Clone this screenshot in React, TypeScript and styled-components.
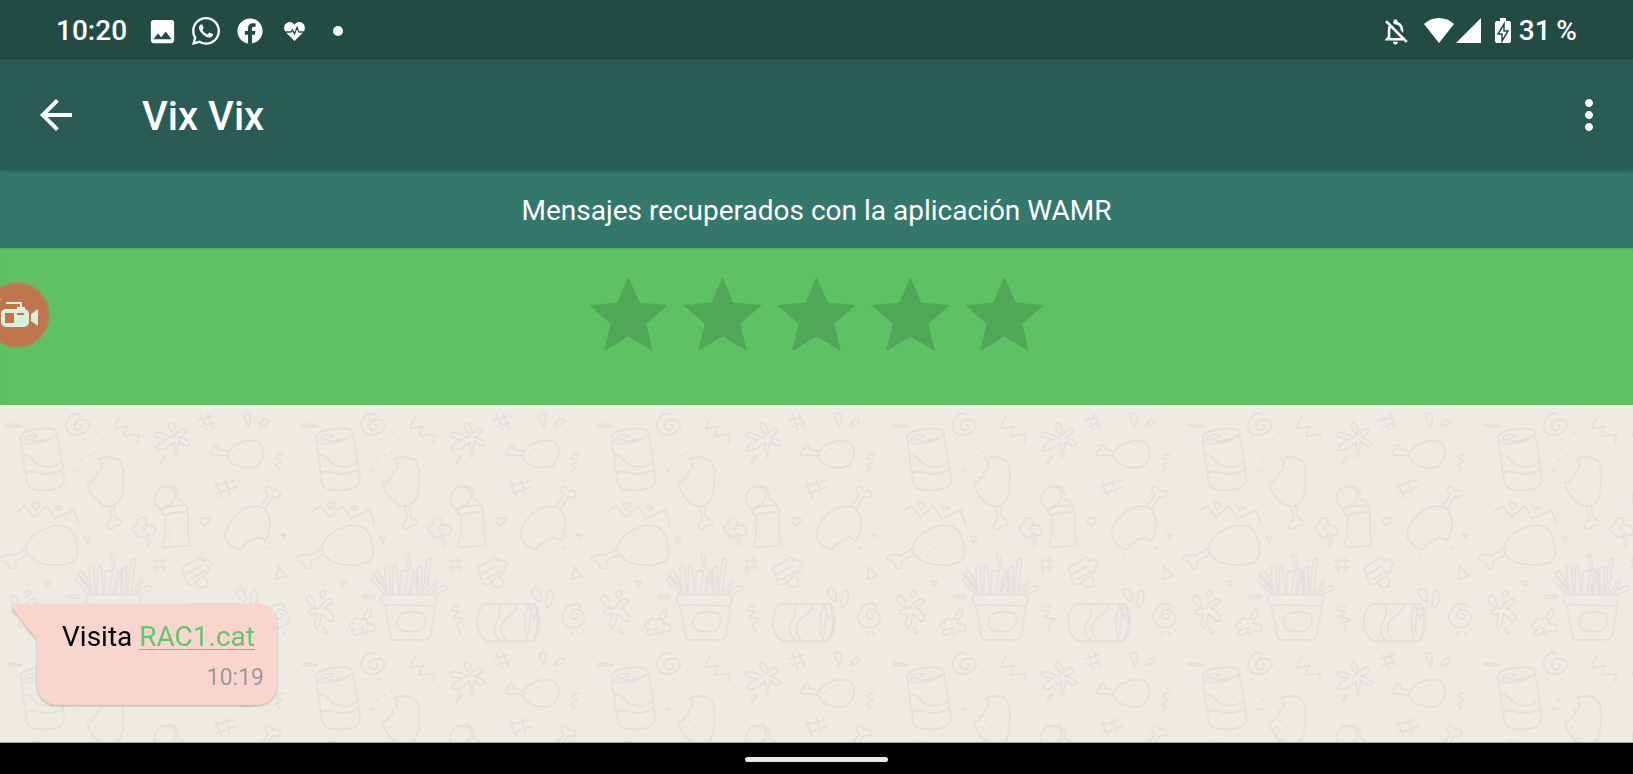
import React from 'react';
import styled, { createGlobalStyle } from 'styled-components';
import { MdImage, MdArrowBack, MdMoreVert, MdOutlineNotificationsOff } from 'react-icons/md';
import { FaWhatsapp, FaFacebook } from 'react-icons/fa';

const GlobalStyle = createGlobalStyle`
  * { box-sizing: border-box; }
  body { margin: 0; font-family: Roboto, "Liberation Sans", sans-serif; color: #fff; }
`;

const Screen = styled.div`
  display: flex;
  flex-direction: column;
  min-height: 100vh;
  overflow: hidden;
  background: #000;
`;

const StatusBar = styled.div`
  display: flex;
  align-items: center;
  justify-content: space-between;
  height: 59px;
  padding: 3px 56px 0 56px;
  background: #224c43;
  font-size: 28px;
  font-weight: 500;
  line-height: 32px;
`;

const StatusGroup = styled.div`
  display: flex;
  align-items: center;
  svg { display: block; flex: none; }
`;

const Clock = styled.time`
  margin-right: 13px;
`;

const IconSlot = styled.span`
  display: flex;
  align-items: center;
  justify-content: center;
  width: 44px;
`;

const SystemIcons = styled(StatusGroup)`
  gap: 13px;
  margin-right: 8px;
`;

const Dot = styled.span`
  width: 10px;
  height: 10px;
  border-radius: 50%;
  background: #fff;
`;

const AppBar = styled.header`
  display: flex;
  align-items: center;
  height: 111px;
  padding: 0 20px 0 32px;
  background: #2a5c55;
  box-shadow: 0 1px 5px rgba(0, 0, 0, 0.3);
  position: relative;
  z-index: 1;
`;

const IconButton = styled.button`
  display: flex;
  padding: 0;
  border: 0;
  background: none;
  color: #fff;
  cursor: pointer;
`;

const Title = styled.h1`
  flex: 1;
  margin: 0 0 0 62px;
  padding-top: 5px;
  font-size: 40px;
  font-weight: 500;
  line-height: 48px;
`;

const Banner = styled.p`
  margin: 0;
  padding: 25px 16px 21px;
  background: #34786c;
  font-size: 28px;
  line-height: 32px;
  text-align: center;
`;

const RatingStrip = styled.section`
  position: relative;
  display: flex;
  justify-content: center;
  align-items: flex-start;
  gap: 15px;
  height: 157px;
  padding-top: 29px;
  background: #5ec264;
  box-shadow: inset 0 2px 2px -1px rgba(0, 0, 0, 0.15);
`;

const StarButton = styled(IconButton)`
  color: #50a757;
`;

const RecorderBubble = styled.button`
  position: absolute;
  top: 34px;
  left: -16px;
  width: 66px;
  height: 66px;
  padding: 0;
  border: 2px solid #a98c50;
  border-radius: 50%;
  background: #bf764d;
  overflow: hidden;
  svg { display: block; }
`;

const Chat = styled.main`
  position: relative;
  display: flex;
  flex: 1;
  flex-direction: column;
  justify-content: flex-end;
  align-items: flex-start;
  padding: 24px 37px 37px;
  border-bottom: 1px solid #a5a29e;
  background: #eeebe4;
`;

const Wallpaper = styled.svg`
  position: absolute;
  inset: 0;
  width: 100%;
  height: 100%;
`;

const Message = styled.article`
  position: relative;
  display: flex;
  flex-direction: column;
  padding: 17px 13px 11px 25px;
  border-radius: 0 20px 20px 20px;
  background: #f8d5cd;
  color: #000;
  filter: drop-shadow(0 1px 1px rgba(0, 0, 0, 0.25));
`;

const Tail = styled.svg`
  position: absolute;
  top: 0;
  left: -25px;
`;

const MessageText = styled.p`
  margin: 0;
  padding-right: 9px;
  font-size: 28px;
  line-height: 32px;
`;

const MessageLink = styled.a`
  color: #65c672;
  text-decoration: underline;
  text-decoration-thickness: 1px;
  text-underline-offset: 3px;
`;

const MessageTime = styled.time`
  align-self: flex-end;
  padding-top: 9px;
  color: #9a9a9a;
  font-size: 23px;
  line-height: 32px;
`;

const NavBar = styled.footer`
  display: flex;
  align-items: center;
  justify-content: center;
  height: 31px;
  padding-top: 2px;
`;

const HomeHandle = styled.div`
  width: 143px;
  height: 5px;
  border-radius: 3px;
  background: #e8e8e8;
`;

const Star = () => (
  <svg width="79" height="74" viewBox="0 0 79 74" fill="currentColor" aria-hidden="true">
    <path d="M39.5 0 50.6 25.7 79 28 57.3 46.7 63.8 74 39.5 59.6 15.2 74 21.7 46.7 0 28 28.4 25.7z" />
  </svg>
);

const Doodles = () => (
  <Wallpaper aria-hidden="true">
    <defs>
      <pattern id="doodles" x="-5.5" y="0" width="295.5" height="239" patternUnits="userSpaceOnUse">
        <g transform="scale(.33333) translate(0 -15)" fill="none" stroke="#e3e0db" strokeWidth="5.5" strokeLinecap="round" strokeLinejoin="round">
          {/* soda can */}
          <path d="M78 110c6-16 40-25 80-25 18 0 28 5 30 15-4 14-35 26-68 31-24 3-42-4-42-21zM78 110l5 45 14 95c4 16 25 22 55 21 34-1 58-12 58-33l-8-60-14-78M84 166c24-4 30 18 48 28 24 12 56 8 72-14M97 218c20-12 34 6 62 4 25-2 40-8 46-18M90 118c4-16 50-18 38-8-12 8-34 10-38 8zM110 124c30 0 66-10 74-18" />
          {/* dash, spiral and squiggle */}
          <path d="M36 75c12-5 34-1 46 4-14 4-38 2-46-4z" />
          <path d="M256 46c-10-12-34-2-40 20-8 26 12 42 34 39 24-3 38-22 33-35-6-14-36-16-43 2-5 14 10 24 20 16 7-6 2-16-4-12" />
          <path d="M374 54c-8 12-14 22-12 32 14 0 26-8 38-6-6 10-14 18-10 28 14 0 30-8 44-2-4 8-6 12-4 22" />
          <path d="M226 121h1M268 120h1M306 98h4M285 166l2-2M302 158h2M258 183l4-2M242 210l12 2M250 243h1" />
          {/* bitten ice lolly */}
          <path d="M311 178c14-8 36-8 54-3 14 6 22 22 22 46l-2 50c-4 30-20 48-46 48-28-6-54-36-61-72 12 2 20-4 18-14 12 2 16-8 12-18 14-2 18-14 10-22 8-2 8-10-7-15zM344 320l8 40c-16 4-18 26-4 28 12 0 12-12 16-12 16 4 22-12 8-20-8-2-8 0-10-4l-4-32" />
          <path d="M300 266h1M318 298h1M332 268h1M356 280h1M340 298h1M312 246h1" />
          {/* splash */}
          <path d="M542 104c-10-8-20-20-18-30 6-12 20 0 22 28 8-8 18-20 28-16 10 8-8 22-22 26 12 2 26 6 34 18-2 12-20 10-32-8-4 12-4 34-10 50-6-18-4-36-4-46-16 12-34 30-54 24-6-14 16-22 32-32-16-2-38-4-38-14 6-14 34-2 50 10zM498 190c0-10 8-20 14-22 0 10-6 20-14 22z" />
          {/* hash marks */}
          <path d="M620 46l18 44M640 42l16 42M612 60l40-12M618 80l42-14" />
          <path d="M664 246l16 46M694 240l12 44M658 260l60-18M662 282l62-20" />
          <path d="M482 476l4 42M504 474l4 38M476 484l38-2M474 504l46-4" />
          {/* drops */}
          <path d="M748 46c6-10 20-6 20 6 0 14-4 22-6 28-6-10-16-22-14-34zM794 80c2-16 14-24 26-22 8 8-6 18-26 22z" />
          {/* small drumstick */}
          <path d="M698 168c4-26 34-42 64-46 28-2 44 10 44 34-2 34-20 48-46 48-26-2-58-12-62-36zM698 154l-26-6c2-18-18-18-16 0-16 10-10 20 6 18 10-4 18 0 36 2" />
          <path d="M718 160h1M734 146h1M758 134h1M782 148h1M746 156h1" />
          <path d="M866 164c-14-4-22 2-20 12 4 4 14 2 16 8-2 8-16 4-20 12 2 6 14 2 12 8l-6 10" />
          {/* zigzag and hearts */}
          <path d="M66 338c8-8 18-20 28-20l24 34 40-34 24 38 56-26c8 12 10 28 16 46" />
          <path d="M112 310c2-6 12-2 12 2 4-4 12-2 10 4-4 8-10 12-14 12-4-6-8-10-8-18zM182 320c4-4 10 0 10 2 4-4 12-2 12 0-4 8-10 10-14 10-4-2-6-6-8-12zM270 412c4-4 14-2 16 2-2 8-6 12-8 16-4-4-8-10-8-18zM620 358c8-6 12-6 14-2 8-4 14 0 12 6-4 8-12 12-18 14-6-4-12-12-8-18z" />
          {/* roast leg */}
          <path d="M94 444c8-36 52-64 96-68 34 0 50 18 54 46 6 26 10 46-4 60-20 14-54 14-80 12-32-4-62-22-66-50zM94 446l-38 22c-8-8-38-2-38 8 2 12 22 6 24 14-2 14 8 20 18 14 6-6 4-14 2-20l40-22" />
          <path d="M118 450h1M138 472h1M162 444h1M188 470h1M210 450h1M234 472h1M186 426h1" />
          {/* flower */}
          <path d="M430 400c-18 0-22-24-2-26-2-16 14-28 26-16 4 10 2 16 0 20 20-8 36 10 26 24-8 10-18 2-24-4 0 12-18 22-26 10-2-6 0-8 0-8zM442 386c6-6 10 0 8 6M454 412l6 28M462 410l6 22" />
          {/* ice cream cup */}
          <path d="M500 328c-22-12-28-44-4-62 20-14 44-2 46 16 0 20-12 34-32 38M518 262c8-8 20-6 20 2l14 16c-2 10-4 16 0 20 12 2 18 6 20 14M502 328c12-8 52-16 74-10 6 6 4 14 0 18-22 0-48 4-66 10-8-4-10-12-8-18zM514 346l-2 54-8 40c16 4 54-2 84-4l-6-26-2-74M540 262l10 12" />
          <path d="M520 386h1M526 398h1M520 410h1M524 422h1" />
          {/* bitten drumstick */}
          <path d="M740 448c-24-2-46-20-48-44 4-44 48-84 94-86 28 0 42 26 40 58-2 24-6 34-16 50-2-12-8-14-14-10-4-8-14-6-16 4-10-6-16 0-14 8-14-2-18 6-26 20zM798 318l24-34c-14-8-12-22 0-24 10 0 8 8 12 12 8-6 24 2 24 12-4 10-18 8-24 6l-20 34" />
          <path d="M776 346h1M800 346h1M784 370h1M806 370h1M800 392h1M728 472h4M748 482h1M776 484h1M804 470h4M822 444h4M858 400l14 4-4 8z" />
          {/* fries */}
          <path d="M276 584l162-1c2 10 2 20-2 34-54 0-108-2-158-4-6-10-4-20-2-29zM284 616l20 104 104-1c8-2 12-6 14-16l14-86M322 668c0-22 18-33 44-33s42 8 40 28-16 32-42 32-42-6-42-27z" />
          <path d="M282 580l-38-38c0-10 6-12 12-8l36 46M284 560l-34-38c0-8 12-12 16-6l26 48M288 580l-4-78c2-8 12-8 14 0l4 80M308 580l2-82c4-4 8-2 10 4l6 78M330 580l2-64 22-4M344 580l12-72-10-42c2-6 10-4 12 0l4 44M356 580l14-70 8 8-16 62M386 580l-4-72 14-10-2 82M400 580l6-72 6-28c8-8 12-4 10 4l-12 96M378 516l2 64M414 578l24-36c8-4 8 2 6 6l-18 32M426 580l30-22c12-2 20 6 14 12l-32 12" />
          {/* cupcake */}
          <path d="M564 512c-2-8 6-14 14-18l30-18c10-8 20 2 14 8 16-8 28 0 30 10-2 6-6 6-10 8 8 14-8 20-14 24l-32 26c-10 4-14 4-18-2zM574 524l46-28M586 540l48-28M602 544c6 18 22 22 34 14 6-10 2-22-6-28" />
          <path d="M850 500l26 28-30 10zM150 546c4-2 14-2 18 0-2 6-6 8-8 12-4-2-8-6-10-12z" />
          {/* small splash */}
          <path d="M48 596c4-16 18-10 22 4 4 12 6 20 4 22-14-4-24-14-26-26zM92 592c-4-14 4-24 14-20 6 10-6 20-14 20zM90 622c6-14 22-30 36-24 8 8-4 16-24 24 14 6 34 26 28 38-8 12-20-6-36-20-2 20-2 38-12 44-12 0-8-12-2-44-18 8-26 2-24-6 8-6 16-6 34-12zM98 684c8 2 14 8 14 18-10 2-16-8-14-18zM216 590c10-8 32-6 40 0-8 6-28 6-40 0z" />
          {/* clover */}
          <path d="M196 690c-22-2-24-20-4-22-4-16 12-18 20-8 6-10 22-2 18 12 14-4 26 4 26 14-6 14-16 8-24 4 0 12-16 18-22 6-6 14-28 10-24-2 4-6 8-8 10-4zM222 656c2-14 10-26 20-30 6 10-2 24-10 34M206 686l14-2M214 694l8-4" />
          <path d="M508 620c-14-4-24 0-24 8 4 8 18 2 22 10-2 8-14 4-18 12 4 6 28 0 34 8-4 8-14 6-18 12-4 10 2 20 6 30" />
          {/* can lying on its side */}
          <path d="M590 612h144c10 14 16 38 14 60-2 28-10 44-20 52H598c-20-2-36-28-36-54s8-56 28-58zM628 612c4 26-2 46-12 60-8 22-2 40 18 50M682 612c-2 26-24 32-40 48-14 22-10 44 8 64M716 612c-14 32-16 78-2 110M734 618c12 30 10 74-4 98M716 618l14 34M724 620l-8 80M738 640l-8 20" />
          <path d="M726 574c4-16 24-8 26 10 2 10 2 18 0 22-16-6-26-18-26-32zM768 624c-2-20 0-42 10-54 12 2 12 16 10 30-4 14-10 22-20 24z" />
          {/* lower spiral */}
          <path d="M872 620c-10-16-36-8-46 8-16 22-10 46 14 54 28 6 46-10 44-30-4-20-26-30-38-18-8 14 2 28 14 22 8-6 6-16-2-14M842 704l4-6M864 702l4-4M880 690h2" />
        </g>
      </pattern>
    </defs>
    <rect width="100%" height="100%" fill="url(#doodles)" />
  </Wallpaper>
);

export default function App() {
  return (
    <Screen>
      <GlobalStyle />
      <StatusBar>
        <StatusGroup>
          <Clock>10:20</Clock>
          <IconSlot><MdImage size={31} /></IconSlot>
          <IconSlot><FaWhatsapp size={32} /></IconSlot>
          <IconSlot><FaFacebook size={26} /></IconSlot>
          <IconSlot>
            <svg width="21" height="19" viewBox="0 0 21 19" aria-hidden="true">
              <path fill="#fff" d="M10.500 19 2 10.500C-.8 7.500-.4 2.700 2.700.9 5.500-.8 8.800 0 10.500 2.700 12.200 0 15.500-.8 18.300.9c3.100 1.800 3.500 6.600.7 9.600z" />
              <path fill="none" stroke="#224c43" strokeWidth="1.300" d="M0 10h7l1.500-2 2 4 2.500-6.500 2 4.500h6" />
            </svg>
          </IconSlot>
          <IconSlot><Dot /></IconSlot>
        </StatusGroup>
        <StatusGroup>
          <SystemIcons>
            <MdOutlineNotificationsOff size={31} />
            <svg width="58" height="26" viewBox="0 0 58 26" fill="#fff" aria-hidden="true">
              <path d="M0 6C8-2 22-2 30 6L15 25z" />
              <path d="M32 25 57 0v25z" />
            </svg>
            <svg width="16" height="26" viewBox="0 0 16 26" aria-hidden="true">
              <path fill="#fff" d="M5 0h6v3h3a2 2 0 0 1 2 2v18a2 2 0 0 1-2 2H2a2 2 0 0 1-2-2V5a2 2 0 0 1 2-2h3z" />
              <path fill="#fff" stroke="#224c43" strokeWidth="1.500" d="M9 6v7h4L7 23v-7H3z" />
            </svg>
          </SystemIcons>
          <span>31&#8201;%</span>
        </StatusGroup>
      </StatusBar>
      <AppBar>
        <IconButton aria-label="Atrás"><MdArrowBack size={48} /></IconButton>
        <Title>Vix Vix</Title>
        <IconButton aria-label="Más opciones"><MdMoreVert size={48} /></IconButton>
      </AppBar>
      <Banner>Mensajes recuperados con la aplicación WAMR</Banner>
      <RatingStrip aria-label="Valoración">
        {[1, 2, 3, 4, 5].map((n) => (
          <StarButton key={n} aria-label={`${n} de 5`}><Star /></StarButton>
        ))}
        <RecorderBubble aria-label="Grabar pantalla">
          <svg width="62" height="62" viewBox="-14 -31 62 62" aria-hidden="true">
            <rect x="1" y="-6" width="28" height="18" rx="5" fill="#d8f0d8" />
            <path fill="#d8f0d8" d="M38-6v17l-7-5v-7zM17-8h8v4h-8z" />
            <path fill="none" stroke="#d8f0d8" strokeWidth="2" d="M6-12h15v5" />
            <path fill="#bf764d" d="M5-2h9v10H5zM17-2h7v2h-7z" />
            <path fill="#d8f0d8" d="M-2-16h3l-2 3z" />
          </svg>
        </RecorderBubble>
      </RatingStrip>
      <Chat>
        <Doodles />
        <Message>
          <Tail width="26" height="38" viewBox="0 0 26 38" aria-hidden="true">
            <path fill="#f8d5cd" d="M3 0H26V38C24 34 20 29 14 22L1 5C0 3 0 0 3 0z" />
          </Tail>
          <MessageText>Visita <MessageLink href="#rac1">RAC1.cat</MessageLink></MessageText>
          <MessageTime>10:19</MessageTime>
        </Message>
      </Chat>
      <NavBar><HomeHandle /></NavBar>
    </Screen>
  );
}
